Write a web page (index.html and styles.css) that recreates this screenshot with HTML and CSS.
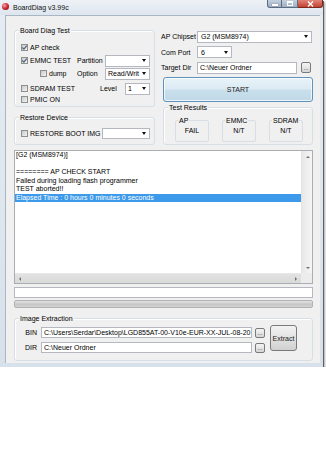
FILE: index.html
```html
<!DOCTYPE html>
<html lang="en">
<head>
  <meta charset="UTF-8">
  <title>BoardDiag v3.99c</title>
  <link rel="stylesheet" href="styles.css">
</head>
<body>
  <div class="window">
    <div class="titlebar">
      <span class="app-icon"></span>
      <span class="title">BoardDiag v3.99c</span>
      <div class="caption">
        <span class="cap cap-min"><i class="glyph-min"></i></span>
        <span class="cap cap-max"><i class="glyph-max"></i></span>
        <span class="cap cap-close">
          <svg width="7" height="6" viewBox="0 0 7 6"><path d="M1 0.5 L6 5.5 M6 0.5 L1 5.5" stroke="#fff" stroke-width="1.4"/></svg>
        </span>
      </div>
    </div>

    <div class="frame">
      <div class="client">

        <div class="top">
          <div class="left-col">
            <div class="group diag">
              <span class="group-label">Board Diag Test</span>
              <div class="diag-rows">
                <div class="row r-ap">
                  <label class="chk"><span class="box"><svg width="7" height="7" viewBox="0 0 7 7"><path d="M1.3 3.5 L2.9 5.1 L5.8 1.6" stroke="#4f6180" stroke-width="1.2" fill="none"/></svg></span>AP check</label>
                </div>
                <div class="row r-emmc">
                  <label class="chk cell"><span class="box"><svg width="7" height="7" viewBox="0 0 7 7"><path d="M1.3 3.5 L2.9 5.1 L5.8 1.6" stroke="#4f6180" stroke-width="1.2" fill="none"/></svg></span>EMMC TEST</label>
                  <span class="lbl">Partition</span>
                  <span class="combo w45"><span class="val"></span><span class="arrow"></span></span>
                </div>
                <div class="row r-dump">
                  <label class="chk cell indent"><span class="box"></span>dump</label>
                  <span class="lbl">Option</span>
                  <span class="combo w45"><span class="val">Read/Writ</span><span class="arrow"></span></span>
                </div>
                <div class="row r-sdram">
                  <label class="chk"><span class="box"></span>SDRAM TEST</label>
                  <span class="lbl level">Level</span>
                  <span class="combo w25"><span class="val">1</span><span class="arrow"></span></span>
                </div>
                <div class="row r-pmic">
                  <label class="chk"><span class="box"></span>PMIC ON</label>
                </div>
              </div>
            </div>

            <div class="group restore">
              <span class="group-label">Restore Device</span>
              <div class="row r-restore">
                <label class="chk restore-chk"><span class="box"></span>RESTORE BOOT IMG</label>
                <span class="combo w48"><span class="val"></span><span class="arrow"></span></span>
              </div>
            </div>
          </div>

          <div class="right-col">
            <div class="field">
              <span class="field-lbl">AP Chipset</span>
              <span class="combo w115"><span class="val">G2 (MSM8974)</span><span class="arrow"></span></span>
            </div>
            <div class="field">
              <span class="field-lbl">Com Port</span>
              <span class="combo w35"><span class="val">6</span><span class="arrow"></span></span>
            </div>
            <div class="field">
              <span class="field-lbl">Target Dir</span>
              <span class="textbox w100">C:\Neuer Ordner</span>
              <span class="dots target-dots">...</span>
            </div>
            <button class="start">START</button>

            <div class="group results">
              <span class="group-label">Test Results</span>
              <div class="result-row">
                <div class="mini"><span class="mini-label">AP</span><div class="mini-val">FAIL</div></div>
                <div class="mini"><span class="mini-label">EMMC</span><div class="mini-val">N/T</div></div>
                <div class="mini"><span class="mini-label">SDRAM</span><div class="mini-val">N/T</div></div>
              </div>
            </div>
          </div>
        </div>

        <div class="log">
          <div class="log-text">
            <div class="line">[G2 (MSM8974)]</div>
            <div class="line"></div>
            <div class="line">======== AP CHECK START</div>
            <div class="line">Failed during loading flash programmer</div>
            <div class="line">TEST aborted!!</div>
            <div class="line sel">Elapsed Time : 0 hours 0 minutes 0 seconds</div>
          </div>
          <div class="vscroll">
            <span class="sb-btn"><i class="tri-up"></i></span>
            <span class="sb-btn"><i class="tri-down"></i></span>
          </div>
          <div class="hscroll">
            <span class="sb-btn"><i class="tri-left"></i></span>
            <span class="sb-btn"><i class="tri-right"></i></span>
          </div>
          <div class="corner"></div>
        </div>

        <div class="status-box"></div>
        <div class="progress"></div>

        <div class="group extract">
          <span class="group-label">Image Extraction</span>
          <div class="extract-body">
            <div class="extract-rows">
              <div class="erow">
                <span class="elbl">BIN</span>
                <span class="textbox w211">C:\Users\Serdar\Desktop\LGD855AT-00-V10e-EUR-XX-JUL-08-20</span>
                <span class="dots">...</span>
              </div>
              <div class="erow">
                <span class="elbl">DIR</span>
                <span class="textbox w211">C:\Neuer Ordner</span>
                <span class="dots">...</span>
              </div>
            </div>
            <button class="extract-btn">Extract</button>
          </div>
        </div>

      </div>
    </div>
  </div>
</body>
</html>
```

FILE: styles.css
```css
* {
  box-sizing: border-box;
}

body {
  margin: 0;
  background: #fff;
  font-family: "Liberation Sans", Arial, sans-serif;
  font-size: 7px;
  line-height: 9px;
  color: #000;
}

.window {
  width: 323px;
  background: linear-gradient(#e6ecf2, #d7e1eb);
  box-shadow: 1px 1px 0 #606060, 2px 2px 2px rgba(0, 0, 0, 0.35);
}

/* title bar */
.titlebar {
  display: flex;
  align-items: flex-start;
  height: 15px;
  background: linear-gradient(#eef2f6, #dde5ee);
}

.app-icon {
  width: 7px;
  height: 7px;
  margin: 3px 0 0 2px;
  border-radius: 50%;
  background: radial-gradient(circle at 35% 35%, #f7a0a0, #c8202f 55%, #7c0b16);
}

.title {
  margin: 2.5px 0 0 4px;
  color: #111;
}

.caption {
  display: flex;
  margin-left: auto;
  height: 8px;
}

.cap {
  display: flex;
  align-items: center;
  justify-content: center;
  height: 8px;
  border: 1px solid #5b6b80;
  border-top: none;
}

.cap-min {
  width: 15px;
  border-radius: 0 0 0 3px;
  background: linear-gradient(#c4d1df, #9fb0c4);
}

.cap-max {
  width: 16px;
  border-left: none;
  background: linear-gradient(#c4d1df, #9fb0c4);
}

.cap-close {
  width: 25px;
  border-left: none;
  border-color: #7a2a22;
  border-radius: 0 0 3px 0;
  background: linear-gradient(#e0857a, #c4412f);
}

.glyph-min {
  width: 6px;
  height: 2px;
  margin-top: 3px;
  background: #fff;
  box-shadow: 0 0 1px #334;
}

.glyph-max {
  width: 6px;
  height: 5px;
  border: 1px solid #fff;
  border-top-width: 2px;
}

/* frame and client */
.frame {
  padding: 0 3px 4px 5px;
}

.client {
  background: #f0f0f0;
  border: 1px solid #a9b6c4;
  border-width: 1px 0 0 1px;
  padding: 0 7px 2px 8px;
}

.top {
  display: flex;
  gap: 6px;
  padding-top: 14px;
}

.left-col {
  width: 141px;
}

.right-col {
  width: 152px;
}

.group {
  border: 1px solid #d5dfe5;
  border-radius: 3px;
  box-shadow: inset 1px 1px 0 #fff;
}

.group-label {
  display: block;
  width: fit-content;
  height: 9px;
  margin: -5px 0 0 4px;
  padding: 0 1px;
  background: #f0f0f0;
}

/* board diag group */
.diag {
  padding-bottom: 2px;
}

.diag-rows {
  margin-top: 7px;
  padding: 0 4px 0 6px;
}

.row {
  display: flex;
  align-items: center;
}

.r-ap { height: 11px; }
.r-emmc { height: 13px; margin-top: 1px; }
.r-dump { height: 13px; }
.r-sdram { height: 13px; margin-top: 2px; }
.r-pmic { height: 9px; }

.chk {
  display: flex;
  align-items: center;
  white-space: nowrap;
}

.chk.cell {
  width: 56px;
}

.chk.indent {
  padding-left: 19px;
}

.box {
  display: block;
  width: 7px;
  height: 7px;
  margin-right: 2px;
  border: 1px solid #8e8f8f;
  background: linear-gradient(135deg, #c9c9c9, #f4f4f4);
}

.box svg {
  display: block;
  margin: -1px 0 0 -1px;
}

.lbl {
  width: 28px;
}

.lbl.level {
  width: 21px;
  margin-left: auto;
  margin-right: 4px;
}

.combo {
  display: flex;
  align-items: center;
  height: 12px;
  background: #fff;
  border: 1px solid #b5b8c0;
  padding: 0 3px 0 2px;
}

.combo .val {
  flex: 1;
  white-space: nowrap;
  overflow: hidden;
}

.arrow {
  width: 0;
  height: 0;
  border-left: 2px solid transparent;
  border-right: 2px solid transparent;
  border-top: 3px solid #111;
}

.w25 { width: 25px; }
.w35 { width: 35px; }
.w45 { width: 45px; }
.w48 { width: 48px; }
.w100 { width: 100px; }
.w115 { width: 115px; }
.w211 { width: 211px; }

/* restore group */
.restore {
  margin-top: 10px;
  padding-bottom: 5px;
}

.r-restore {
  height: 11px;
  margin-top: 6px;
  padding: 0 4px 0 6px;
}

.restore-chk {
  width: 81px;
}

.r-restore .combo {
  height: 11px;
}

/* right column */
.field {
  display: flex;
  align-items: center;
  height: 12px;
  margin-bottom: 3.5px;
  padding-top: 1px;
}

.field-lbl {
  width: 36px;
  white-space: nowrap;
}

.field .combo {
  height: 12px;
  padding-left: 3px;
}

.textbox {
  display: flex;
  align-items: center;
  height: 12px;
  background: #fff;
  border: 1px solid #b5b8c0;
  padding-left: 2px;
  white-space: nowrap;
  overflow: hidden;
}

.dots {
  display: flex;
  align-items: flex-end;
  justify-content: center;
  width: 10px;
  height: 10px;
  border: 1px solid #7a7a7a;
  border-radius: 2px;
  background: linear-gradient(#f4f4f4, #d6d6d6);
  font-size: 6px;
  line-height: 7px;
  color: #222;
}

.target-dots {
  margin-left: 4px;
  height: 11px;
}

.start {
  display: block;
  width: 150px;
  height: 25px;
  margin: 0.5px 0 0 2px;
  padding: 0;
  border: 1px solid #5f93bd;
  border-radius: 3px;
  background: linear-gradient(#e9f3f9, #dceaf3 48%, #c9dfec 52%, #c0d9e8);
  box-shadow: inset 0 0 0 1px rgba(255, 255, 255, 0.7);
  font-family: "Liberation Sans", Arial, sans-serif;
  font-size: 7px;
  color: #222;
}

.results {
  width: 150px;
  margin: 5px 0 0 2px;
  padding-bottom: 2px;
}

.result-row {
  display: flex;
  gap: 13px;
  margin-top: 8px;
  padding-left: 11px;
}

.mini {
  width: 34px;
  height: 22px;
  border: 1px solid #d8dee3;
  border-radius: 2px;
}

.mini-label {
  display: block;
  width: fit-content;
  height: 9px;
  margin: -5px 0 0 2px;
  padding: 0 1px;
  background: #f0f0f0;
}

.mini-val {
  margin-top: 1.5px;
  text-align: center;
}

/* log box */
.log {
  display: grid;
  grid-template-columns: 1fr 11px;
  grid-template-rows: 122px 10px;
  height: 134px;
  margin-top: 5px;
  background: #fff;
  border: 1px solid #abadb3;
}

.log-text {
  overflow: hidden;
}

.line {
  height: 8.5px;
  line-height: 8.5px;
  padding-left: 1px;
  white-space: nowrap;
}

.line.sel {
  background: #3d9aea;
  color: #fff;
}

.vscroll {
  display: flex;
  flex-direction: column;
  justify-content: space-between;
  background: linear-gradient(90deg, #e8e8e8, #f5f5f5);
  border-left: 1px solid #e2e2e2;
}

.hscroll {
  display: flex;
  justify-content: space-between;
  background: linear-gradient(#e2e2e2, #d9d9d9);
  border-top: 1px solid #e8e8e8;
}

.corner {
  background: #ececec;
}

.sb-btn {
  display: flex;
  align-items: center;
  justify-content: center;
  width: 11px;
  height: 11px;
}

.hscroll .sb-btn {
  width: 10px;
  height: 9px;
}

.tri-up,
.tri-down,
.tri-left,
.tri-right {
  width: 0;
  height: 0;
}

.tri-up {
  border-left: 2px solid transparent;
  border-right: 2px solid transparent;
  border-bottom: 2px solid #707070;
}

.tri-down {
  border-left: 2px solid transparent;
  border-right: 2px solid transparent;
  border-top: 2px solid #707070;
}

.tri-left {
  border-top: 2px solid transparent;
  border-bottom: 2px solid transparent;
  border-right: 2px solid #707070;
}

.tri-right {
  border-top: 2px solid transparent;
  border-bottom: 2px solid transparent;
  border-left: 2px solid #707070;
}

.status-box {
  height: 11px;
  margin-top: 3px;
  background: #fff;
  border: 1px solid #b5b8c0;
}

.progress {
  height: 8px;
  margin-top: 2px;
  border: 1px solid #b2b2b2;
  border-radius: 2px;
  background: linear-gradient(#e4e4e4, #c6c6c6 55%, #d4d4d4);
}

/* image extraction */
.extract {
  margin-top: 10px;
  padding-bottom: 7px;
}

.extract-body {
  display: flex;
  align-items: flex-start;
  margin-top: 2px;
}

.extract-rows {
  padding-top: 2px;
}

.erow {
  display: flex;
  align-items: center;
  height: 11px;
  margin-bottom: 4px;
}

.erow:last-child {
  margin-bottom: 0;
}

.elbl {
  width: 26px;
  padding-right: 4px;
  text-align: right;
}

.erow .textbox {
  height: 11px;
}

.erow .dots {
  margin-left: 3px;
}

.extract-btn {
  width: 27px;
  height: 26px;
  margin-left: 5px;
  padding: 0;
  border: 1px solid #7a7a7a;
  border-radius: 3px;
  background: linear-gradient(#f3f3f3, #e2e2e2 50%, #d0d0d0);
  font-family: "Liberation Sans", Arial, sans-serif;
  font-size: 7px;
  color: #222;
}
```
